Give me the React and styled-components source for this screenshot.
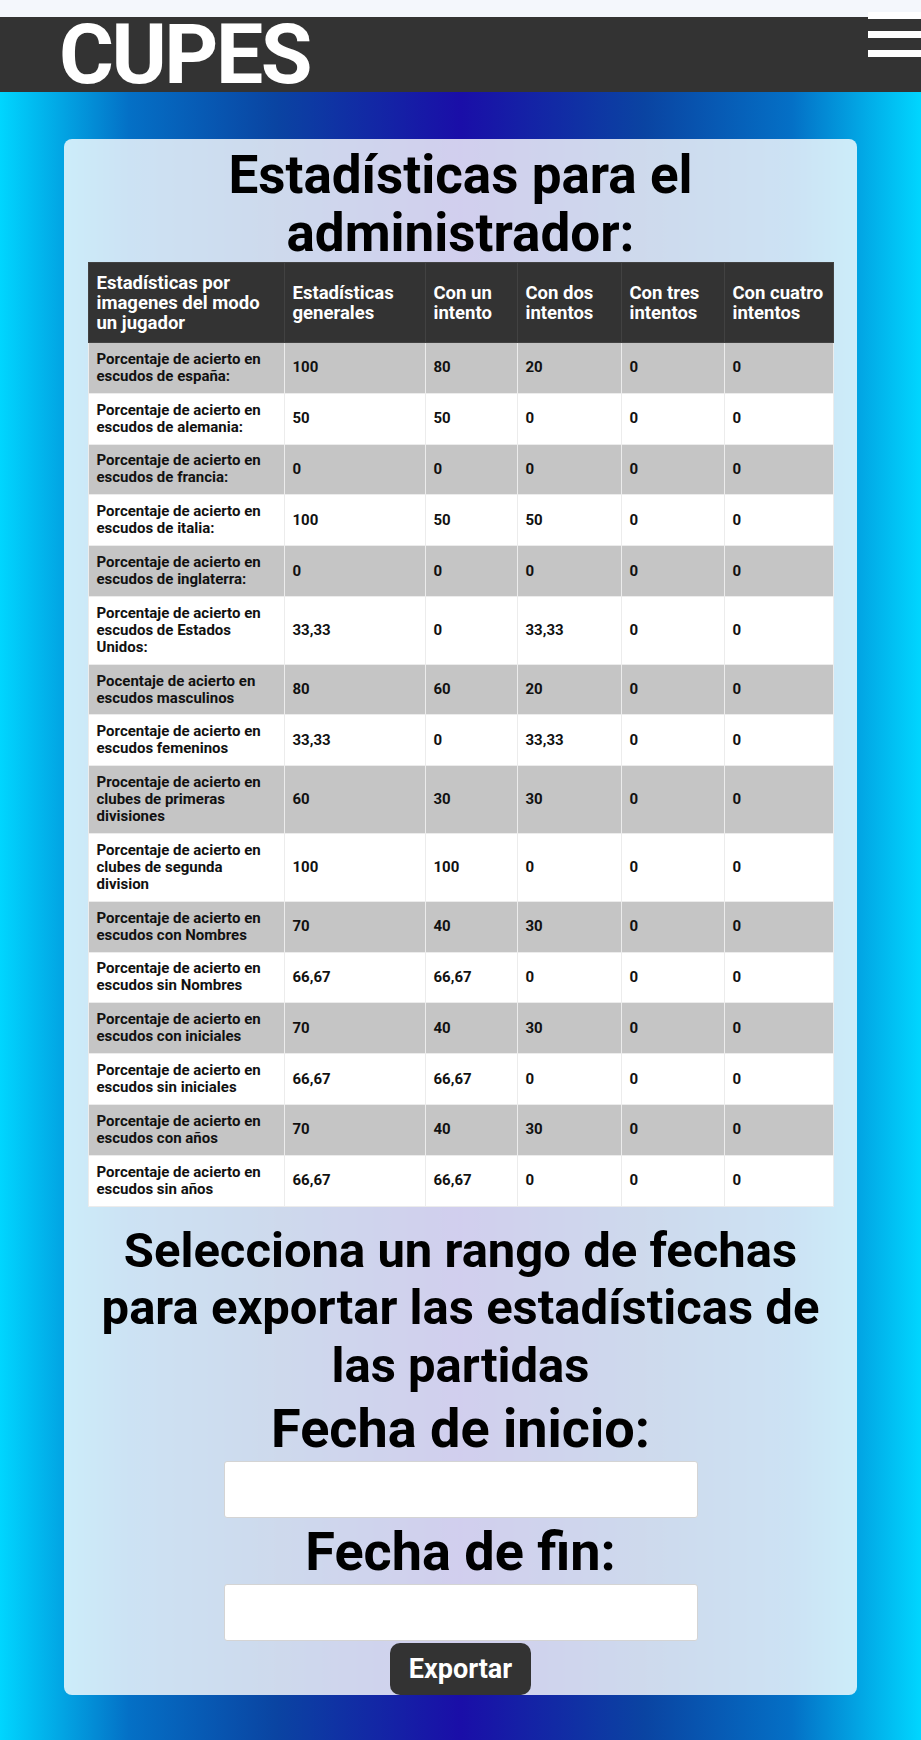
import React from 'react';
import styled, { createGlobalStyle } from 'styled-components';

const GlobalStyle = createGlobalStyle`
  * { box-sizing: border-box; }
  html, body { margin: 0; padding: 0; }
  body {
    font-family: Roboto, "Liberation Sans", sans-serif;
    overflow-x: hidden;
  }
`;

const headers = [
  'Estadísticas por imagenes del modo un jugador',
  'Estadísticas generales',
  'Con un intento',
  'Con dos intentos',
  'Con tres intentos',
  'Con cuatro intentos'
];

const colWidths = [196, 141, 92, 104, 103, 109];

const rows = [
  ['Porcentaje de acierto en escudos de españa:', '100', '80', '20', '0', '0'],
  ['Porcentaje de acierto en escudos de alemania:', '50', '50', '0', '0', '0'],
  ['Porcentaje de acierto en escudos de francia:', '0', '0', '0', '0', '0'],
  ['Porcentaje de acierto en escudos de italia:', '100', '50', '50', '0', '0'],
  ['Porcentaje de acierto en escudos de inglaterra:', '0', '0', '0', '0', '0'],
  ['Porcentaje de acierto en escudos de Estados Unidos:', '33,33', '0', '33,33', '0', '0'],
  ['Pocentaje de acierto en escudos masculinos', '80', '60', '20', '0', '0'],
  ['Porcentaje de acierto en escudos femeninos', '33,33', '0', '33,33', '0', '0'],
  ['Procentaje de acierto en clubes de primeras divisiones', '60', '30', '30', '0', '0'],
  ['Porcentaje de acierto en clubes de segunda division', '100', '100', '0', '0', '0'],
  ['Porcentaje de acierto en escudos con Nombres', '70', '40', '30', '0', '0'],
  ['Porcentaje de acierto en escudos sin Nombres', '66,67', '66,67', '0', '0', '0'],
  ['Porcentaje de acierto en escudos con iniciales', '70', '40', '30', '0', '0'],
  ['Porcentaje de acierto en escudos sin iniciales', '66,67', '66,67', '0', '0', '0'],
  ['Porcentaje de acierto en escudos con años', '70', '40', '30', '0', '0'],
  ['Porcentaje de acierto en escudos sin años', '66,67', '66,67', '0', '0', '0']
];

function App() {
  return (
    <Page>
      <GlobalStyle />
      <TopStrip />
      <Header>
        <Brand>CUPES</Brand>
        <Hamburger>
          <Bar />
          <Bar />
          <Bar />
        </Hamburger>
      </Header>

      <Main>
        <Card>
          <Title>Estadísticas para el administrador:</Title>

          <StatsTable>
            <colgroup>
              {colWidths.map((w, i) => (
                <col key={i} style={{ width: w }} />
              ))}
            </colgroup>
            <thead>
              <tr>
                {headers.map((h) => (
                  <HeadCell key={h}>{h}</HeadCell>
                ))}
              </tr>
            </thead>
            <tbody>
              {rows.map((row, index) => (
                <Row key={index} $striped={index % 2 === 0}>
                  {row.map((value, i) => (
                    <Cell key={i}>{value}</Cell>
                  ))}
                </Row>
              ))}
            </tbody>
          </StatsTable>

          <SubTitle>Selecciona un rango de fechas para exportar las estadísticas de las partidas</SubTitle>

          <Label>Fecha de inicio:</Label>
          <DateInput type="text" />
          <Label>Fecha de fin:</Label>
          <DateInput type="text" />
          <ExportButton>Exportar</ExportButton>
        </Card>
      </Main>
    </Page>
  );
}

export default App;

const Page = styled.div`
  min-height: 1740px;
  display: flex;
  flex-direction: column;
  background: linear-gradient(
    90deg,
    #00d6ff 0%,
    #0470c6 14%,
    #0a44a2 30%,
    #1a0ea8 50%,
    #0a44a2 70%,
    #0470c6 86%,
    #00d6ff 100%
  );
`;

const TopStrip = styled.div`
  height: 17px;
  background: #f4f7fc;
  box-shadow: 0 1px 1px rgba(0, 0, 0, 0.08);
`;

const Header = styled.header`
  height: 75px;
  background: #333333;
  display: flex;
  justify-content: space-between;
  align-items: flex-start;
  padding-left: 59px;
`;

const Brand = styled.h1`
  margin: 0;
  color: #ffffff;
  font-family: Roboto, "Liberation Sans", sans-serif;
  font-weight: 700;
  font-size: 84px;
  line-height: 75px;
  letter-spacing: -2.5px;
`;

const Hamburger = styled.div`
  width: 53px;
  margin-top: -5px;
  display: flex;
  flex-direction: column;
  gap: 12px;
`;

const Bar = styled.span`
  display: block;
  height: 7px;
  background: #ffffff;
`;

const Main = styled.main`
  padding: 47px 64px 43px;
`;

const Card = styled.section`
  background: rgba(255, 255, 255, 0.8);
  border-radius: 8px;
  padding: 7px 24px 0;
  display: flex;
  flex-direction: column;
  align-items: center;
`;

const Title = styled.h2`
  margin: 0;
  text-align: center;
  font-size: 53px;
  line-height: 58px;
  font-weight: 700;
  color: #000000;
`;

const StatsTable = styled.table`
  width: 745px;
  table-layout: fixed;
  border-collapse: collapse;
  font-family: Roboto, "Liberation Sans", sans-serif;
`;

const HeadCell = styled.th`
  background: #333333;
  color: #ffffff;
  text-align: left;
  vertical-align: middle;
  font-size: 18.5px;
  font-weight: 700;
  line-height: 20px;
  padding: 9.5px 5px 9.5px 8px;
  border: 1px solid #424242;
`;

const Row = styled.tr`
  background: ${(props) => (props.$striped ? '#c5c5c5' : '#ffffff')};
`;

const Cell = styled.td`
  font-size: 15px;
  font-weight: 700;
  line-height: 17px;
  color: #111111;
  vertical-align: middle;
  padding: 7.9px 5px 7.9px 8px;
  border: 1px solid #ececec;
`;

const SubTitle = styled.h2`
  margin: 15px 0 3px;
  text-align: center;
  font-size: 49px;
  line-height: 57.5px;
  font-weight: 700;
  color: #000000;
`;

const Label = styled.h3`
  margin: 0;
  font-size: 54px;
  line-height: normal;
  font-weight: 700;
  color: #000000;
`;

const DateInput = styled.input`
  width: 474px;
  height: 57px;
  margin: 1px 0 2px;
  background: #ffffff;
  border: 1px solid #d4d4d4;
  border-radius: 3px;
  outline: none;
`;

const ExportButton = styled.button`
  height: 52px;
  padding: 0 19px;
  border: none;
  border-radius: 10px;
  background: #333333;
  color: #ffffff;
  font-family: Roboto, "Liberation Sans", sans-serif;
  font-size: 27px;
  font-weight: 700;
  cursor: pointer;
`;
